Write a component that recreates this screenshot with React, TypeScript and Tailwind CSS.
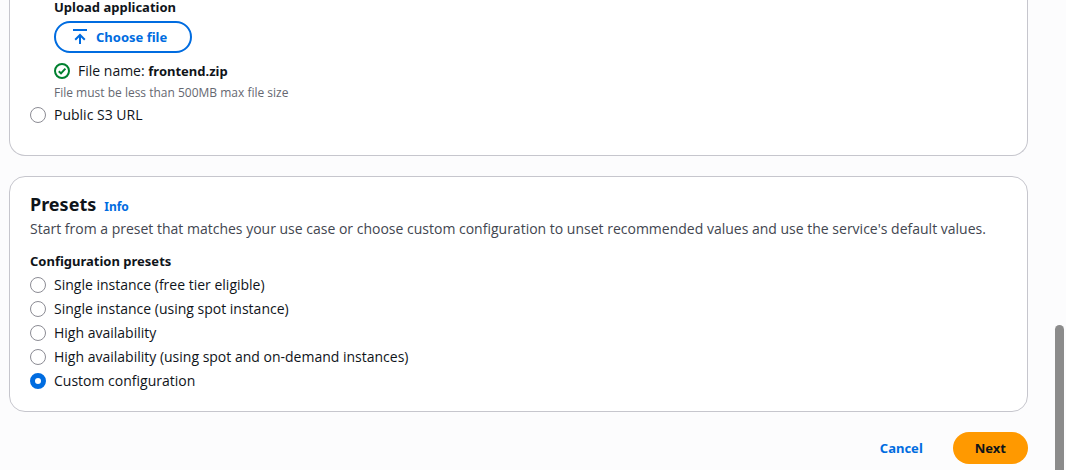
import { useState } from "react";

const presets = [
  "Single instance (free tier eligible)",
  "Single instance (using spot instance)",
  "High availability",
  "High availability (using spot and on-demand instances)",
  "Custom configuration",
];

type RadioProps = {
  name: string;
  label: string;
  checked: boolean;
  onChange: () => void;
};

function Radio({ name, label, checked, onChange }: RadioProps) {
  return (
    <label className="flex w-fit cursor-pointer items-center gap-2 leading-5">
      <input
        type="radio"
        name={name}
        checked={checked}
        onChange={onChange}
        className="size-4 shrink-0 appearance-none rounded-full border border-[#8c8c94] bg-white checked:border-5 checked:border-[#006ce0]"
      />
      {label}
    </label>
  );
}

function UploadIcon() {
  return (
    <svg viewBox="0 0 16 16" className="size-4" fill="none" stroke="currentColor" strokeWidth="2" aria-hidden="true">
      <path d="M1 1h14M8 15V6.5M3.2 10.8 8 6l4.8 4.8" />
    </svg>
  );
}

function SuccessIcon() {
  return (
    <svg viewBox="0 0 16 16" className="size-4 text-[#00802f]" fill="none" stroke="currentColor" strokeWidth="2" aria-hidden="true">
      <circle cx="8" cy="8" r="7" />
      <path d="m4.8 8.2 2.2 2.2 4.4-4.8" />
    </svg>
  );
}

export default function App() {
  const [preset, setPreset] = useState("Custom configuration");
  const [publicUrl, setPublicUrl] = useState(false);

  return (
    <div className="flex h-screen overflow-hidden bg-[#fcfcfd] font-['Open_Sans','Noto_Sans',sans-serif] text-sm text-[#0f141a]">
      <main className="min-w-0 flex-1 pl-[9px]">
        <section className="rounded-b-2xl border border-t-0 border-[#c6c6cd] bg-white px-5 pb-[30px]">
          <div className="mb-1 flex flex-col items-start pl-6">
            <h3 className="mb-[7px] font-['Noto_Sans',sans-serif] text-[13px] leading-[14px] font-bold">
              Upload application
            </h3>
            <button
              type="button"
              className="flex h-8 items-center gap-2 rounded-full border-2 border-[#006ce0] pr-[23px] pl-4 font-['Noto_Sans',sans-serif] text-[13px] font-bold text-[#006ce0]"
            >
              <UploadIcon />
              Choose file
            </button>
            <p className="mt-2 flex items-center gap-2 leading-5">
              <SuccessIcon />
              <span>
                File name: <b className="font-['Noto_Sans',sans-serif] text-[13px] font-bold">frontend.zip</b>
              </span>
            </p>
            <p className="mt-1 text-xs leading-4 text-[#656871]">File must be less than 500MB max file size</p>
          </div>
          <Radio name="source" label="Public S3 URL" checked={publicUrl} onChange={() => setPublicUrl(true)} />
        </section>

        <section className="mt-5 rounded-2xl border border-[#c6c6cd] bg-white px-5 pt-[15px] pb-5">
          <div className="flex items-baseline gap-2 font-['Noto_Sans',sans-serif]">
            <h2 className="text-lg leading-6 font-bold">Presets</h2>
            <a href="#info" className="text-xs font-bold text-[#006ce0]">
              Info
            </a>
          </div>
          <p className="mt-[3px] leading-5 text-[#424650]">
            Start from a preset that matches your use case or choose custom configuration to unset recommended values
            and use the service's default values.
          </p>
          <fieldset className="mt-3">
            <legend className="mb-1 font-['Noto_Sans',sans-serif] text-[13px] leading-5 font-bold">
              Configuration presets
            </legend>
            <div className="flex flex-col gap-1">
              {presets.map((label) => (
                <Radio
                  key={label}
                  name="preset"
                  label={label}
                  checked={preset === label}
                  onChange={() => setPreset(label)}
                />
              ))}
            </div>
          </fieldset>
        </section>

        <div className="mt-5 flex justify-end gap-2 font-['Noto_Sans',sans-serif] text-[13px] font-bold">
          <button type="button" className="h-8 rounded-full px-[22px] text-[#006ce0]">
            Cancel
          </button>
          <button type="button" className="h-8 rounded-full bg-[#ff9900] px-[22px]">
            Next
          </button>
        </div>
      </main>
      <div className="flex w-[38px] shrink-0 justify-end pt-[325px] pr-[2px]" aria-hidden="true">
        <div className="w-[9px] rounded-t-full bg-[#8b8b8b]" />
      </div>
    </div>
  );
}
